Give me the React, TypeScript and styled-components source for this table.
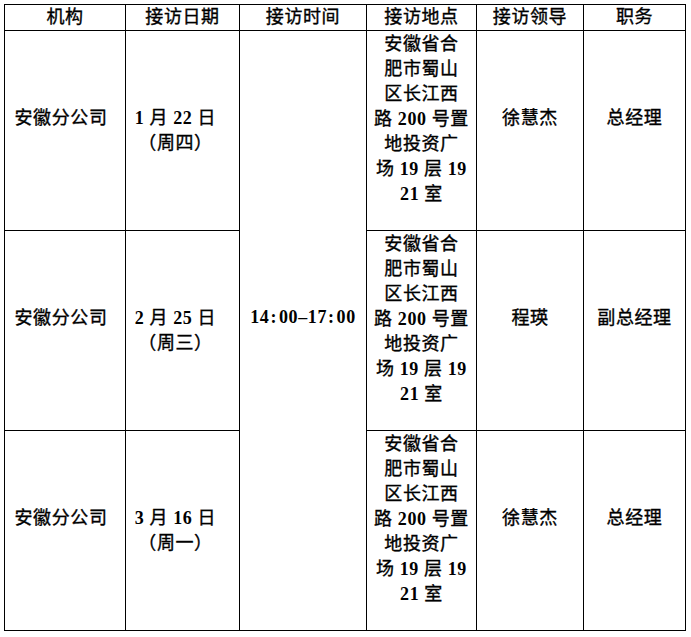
import { createGlobalStyle } from "styled-components";
import styled from "styled-components";

type TVisit = {
  org: string;
  date: string;
  week: string;
  address: string[];
  leader: string;
  title: string;
};

const address = [
  "安徽省合",
  "肥市蜀山",
  "区长江西",
  "路 200 号置",
  "地投资广",
  "场 19 层 19",
  "21 室",
];

const visits: TVisit[] = [
  { org: "安徽分公司", date: "1 月 22 日", week: "（周四）", address, leader: "徐慧杰", title: "总经理" },
  { org: "安徽分公司", date: "2 月 25 日", week: "（周三）", address, leader: "程瑛", title: "副总经理" },
  { org: "安徽分公司", date: "3 月 16 日", week: "（周一）", address, leader: "徐慧杰", title: "总经理" },
];

const headers = ["机构", "接访日期", "接访时间", "接访地点", "接访领导", "职务"];
const widths = [121, 114, 127, 110, 107, 102];

// digits are set in a bold serif, the rest stays in the CJK face
function Mixed({ text }: { text: string }) {
  return (
    <>
      {text.split(/(\d+)/).map((part, i) =>
        /^\d+$/.test(part) ? <Num key={i}>{part}</Num> : part
      )}
    </>
  );
}

export default function App() {
  return (
    <>
      <GlobalStyle />
      <Page>
        <Table>
          <colgroup>
            {widths.map((w, i) => (
              <col key={i} style={{ width: w }} />
            ))}
          </colgroup>
          <thead>
            <tr>
              {headers.map((h) => (
                <HeadCell key={h}>{h}</HeadCell>
              ))}
            </tr>
          </thead>
          <tbody>
            {visits.map((v, i) => (
              <Row key={i}>
                <Cell $lift={25} $padR={8}>
                  {v.org}
                </Cell>
                <Cell $padL={8} $padR={22}>
                  <Mixed text={v.date} />
                  <br />
                  {v.week}
                </Cell>
                {i === 0 && (
                  <Cell rowSpan={3} $lift={26}>
                    <Num>
                      14<Colon>:</Colon>00–17<Colon>:</Colon>00
                    </Num>
                  </Cell>
                )}
                <Cell $lift={22}>
                  {v.address.map((line, j) => (
                    <Line key={j}>
                      <Mixed text={line} />
                    </Line>
                  ))}
                </Cell>
                <Cell $lift={25}>{v.leader}</Cell>
                <Cell $lift={25}>{v.title}</Cell>
              </Row>
            ))}
          </tbody>
        </Table>
      </Page>
    </>
  );
}

const GlobalStyle = createGlobalStyle`
  body {
    margin: 0;
    background: #fff;
    color: #000;
    font-family: "Liberation Serif", "Noto Sans CJK SC", serif;
  }
`;

const Page = styled.div`
  padding: 4px;
`;

const Table = styled.table`
  border-collapse: collapse;
  table-layout: fixed;
  width: 682px;
  font-size: 18px;
  line-height: 25px;
  letter-spacing: 0.6px;
  -webkit-text-stroke: 0.35px #000;
`;

const HeadCell = styled.th`
  height: 25px;
  padding: 0;
  border: 1px solid #000;
  font-weight: 400;
  text-align: center;
  vertical-align: middle;
`;

const Row = styled.tr`
  height: 200px;
`;

const Cell = styled.td<{ $lift?: number; $padL?: number; $padR?: number }>`
  padding: 0 ${({ $padR }) => $padR ?? 0}px ${({ $lift }) => $lift ?? 0}px
    ${({ $padL }) => $padL ?? 0}px;
  border: 1px solid #000;
  font-weight: 400;
  text-align: center;
  vertical-align: middle;
  white-space: nowrap;
`;

const Num = styled.span`
  font-weight: 700;
  -webkit-text-stroke: 0;
`;

const Line = styled.div`
  height: 25px;
`;

const Colon = styled.span`
  margin: 0 2px 0 1px;
`;
